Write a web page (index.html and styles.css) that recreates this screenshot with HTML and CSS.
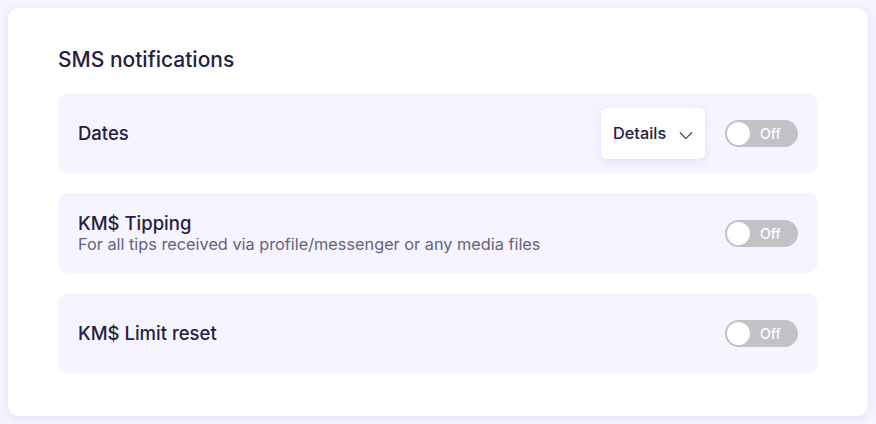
FILE: index.html
```html
<!DOCTYPE html>
<html lang="en">
<head>
  <meta charset="UTF-8" />
  <meta name="viewport" content="width=device-width, initial-scale=1.0"/>
  <title>SMS notifications</title>
  <link rel="stylesheet" href="styles.css">
</head>
<body>
  <div class="card">
    <h2 class="card-title">SMS notifications</h2>

    <div class="setting">
      <div class="setting-text">
        <div class="setting-name">Dates</div>
      </div>
      <button class="details-btn" type="button">
        Details
        <svg class="chevron" width="16" height="9" viewBox="0 0 16 9"><path d="M1 1l7 7 7-7" fill="none" stroke="#2e2c45" stroke-width="1.3"/></svg>
      </button>
      <div class="toggle"><span class="knob"></span><span class="toggle-label">Off</span></div>
    </div>

    <div class="setting">
      <div class="setting-text">
        <div class="setting-name">KM$ Tipping</div>
        <div class="setting-desc">For all tips received via profile/messenger or any media files</div>
      </div>
      <div class="toggle"><span class="knob"></span><span class="toggle-label">Off</span></div>
    </div>

    <div class="setting">
      <div class="setting-text">
        <div class="setting-name">KM$ Limit reset</div>
      </div>
      <div class="toggle"><span class="knob"></span><span class="toggle-label">Off</span></div>
    </div>
  </div>
</body>
</html>
```

FILE: styles.css
```css
body {
  margin: 0;
  padding: 8px;
  background-color: #f6f4fe;
  font-family: Inter, Roboto, "Liberation Sans", sans-serif;
  color: #24213f;
}

.card {
  background-color: white;
  border-radius: 10px;
  box-shadow: 0 2px 10px rgba(140, 120, 240, 0.18);
  padding: 38px 50px 43px;
  display: flex;
  flex-direction: column;
  gap: 20px;
}

.card-title {
  font-size: 21px;
  font-weight: 500;
  margin: 0 0 -1px;
  line-height: 28px;
}

.setting {
  background-color: #f6f4fe;
  border-radius: 10px;
  height: 80px;
  padding: 0 20px;
  display: flex;
  align-items: center;
  box-sizing: border-box;
}

.setting-text {
  flex: 1;
}

.setting-name {
  font-size: 18.5px;
  font-weight: 500;
  line-height: 22px;
}

.setting-desc {
  font-size: 16.3px;
  color: #65637a;
  line-height: 20px;
}

.details-btn {
  display: flex;
  align-items: center;
  gap: 13px;
  width: 104px;
  height: 51px;
  padding: 0 12px;
  margin-right: 20px;
  background-color: white;
  border: none;
  border-radius: 6px;
  box-shadow: 0 2px 8px rgba(140, 120, 240, 0.18);
  font-family: inherit;
  font-size: 16.3px;
  font-weight: 500;
  color: #24213f;
  cursor: pointer;
}

.chevron {
  margin-top: 5px;
}

.toggle {
  width: 73px;
  height: 27px;
  border-radius: 14px;
  background-color: #c2c1c6;
  display: flex;
  align-items: center;
  padding: 0 2px;
  box-sizing: border-box;
}

.knob {
  width: 23px;
  height: 23px;
  border-radius: 50%;
  background-color: white;
}

.toggle-label {
  color: white;
  font-size: 14px;
  font-weight: 500;
  margin-left: 10px;
}
```
